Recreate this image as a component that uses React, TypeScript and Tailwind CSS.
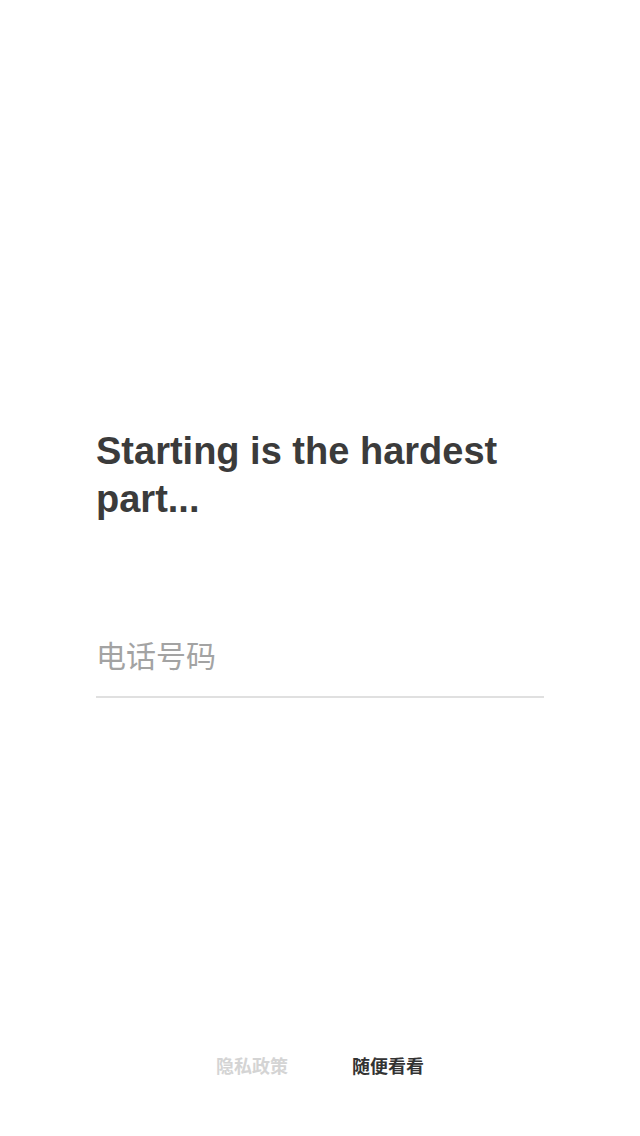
import React from "react";

const App = () => {
    return (
        <div
            className="w-[640px] h-[1136px] bg-white flex flex-col"
            style={{ fontFamily: '"Liberation Sans", "Noto Sans CJK SC", sans-serif' }}
        >
            <div className="flex-1 px-24 pt-[427px]">
                <h1 className="text-[38px] leading-[48px] font-bold text-[#3b3b3b]">
                    Starting is the hardest part...
                </h1>

                <div className="mt-[113px] border-b-2 border-[#e0e0e0] pb-[20px]">
                    <input
                        type="tel"
                        placeholder="电话号码"
                        className="w-full h-[40px] text-[30px] text-[#3b3b3b] placeholder:text-[#a3a3a3] outline-none bg-transparent"
                    />
                </div>
            </div>

            <div className="flex justify-center gap-16 pb-[55px] text-[18px] font-bold">
                <span className="text-[#d4d4d4]">隐私政策</span>
                <span className="text-[#333333]">随便看看</span>
            </div>
        </div>
    );
};

export default App;
